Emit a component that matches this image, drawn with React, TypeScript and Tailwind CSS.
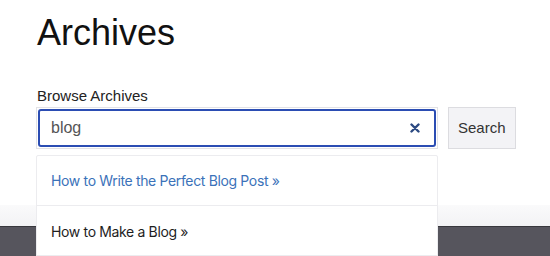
import React from "react";

const App = () => {
  return (
    <div className="relative w-[550px] h-[256px] overflow-hidden bg-white font-['Liberation_Sans',Arial,sans-serif]">
      {/* page content */}
      <div className="h-[205px] pl-[37px] pt-[15px]">
        <h1 className="text-[36px] leading-[36px] text-[#111]">Archives</h1>
        <div className="mt-[35px] text-[15px] leading-[20px] text-[#222]">
          Browse Archives
        </div>
        <div className="mt-[1px] flex items-start gap-[10px]">
          <div className="shrink-0 w-[402px] h-[42px] -ml-[1px] border border-[#e2e2e6] p-[1px]">
            <div className="h-full flex items-center justify-between rounded-[3px] border-2 border-[#2b4db3] pl-[11px] pr-[14px]">
              <span className="text-[16px] text-[#555]">blog</span>
              <svg
                width="10"
                height="10"
                viewBox="0 0 10 10"
                fill="none"
                stroke="#2c4a82"
                strokeWidth={2.4}
                strokeLinecap="round"
              >
                <path d="M1.5 1.5l7 7M8.5 1.5l-7 7" />
              </svg>
            </div>
          </div>
          <button className="shrink-0 h-[42px] px-[9px] border border-[#dcdce0] bg-[#f3f3f6] text-[15px] text-[#333]">
            Search
          </button>
        </div>
      </div>

      {/* footer strip */}
      <div className="h-[21px] bg-gradient-to-b from-[#fafafb] to-[#f3f3f5]"></div>
      <div className="h-[40px] border-t border-[#38383d] bg-[#56555d]"></div>

      {/* autocomplete menu */}
      <div className="absolute left-[36px] top-[155px] w-[402px] rounded-t-[2px] border border-[#ececef] bg-white font-['Inter',sans-serif] text-[14px] tracking-[-0.35px]">
        <div className="h-[50px] flex items-center px-[14px] border-b border-[#ececef] text-[#3b72b9]">
          How to Write the Perfect Blog Post »
        </div>
        <div className="h-[50px] flex items-center px-[14px] pt-[2px] border-b border-[#ececef] text-[#1e1e1e]">
          How to Make a Blog »
        </div>
        <div className="h-[50px]"></div>
      </div>
    </div>
  );
};

export default App;
